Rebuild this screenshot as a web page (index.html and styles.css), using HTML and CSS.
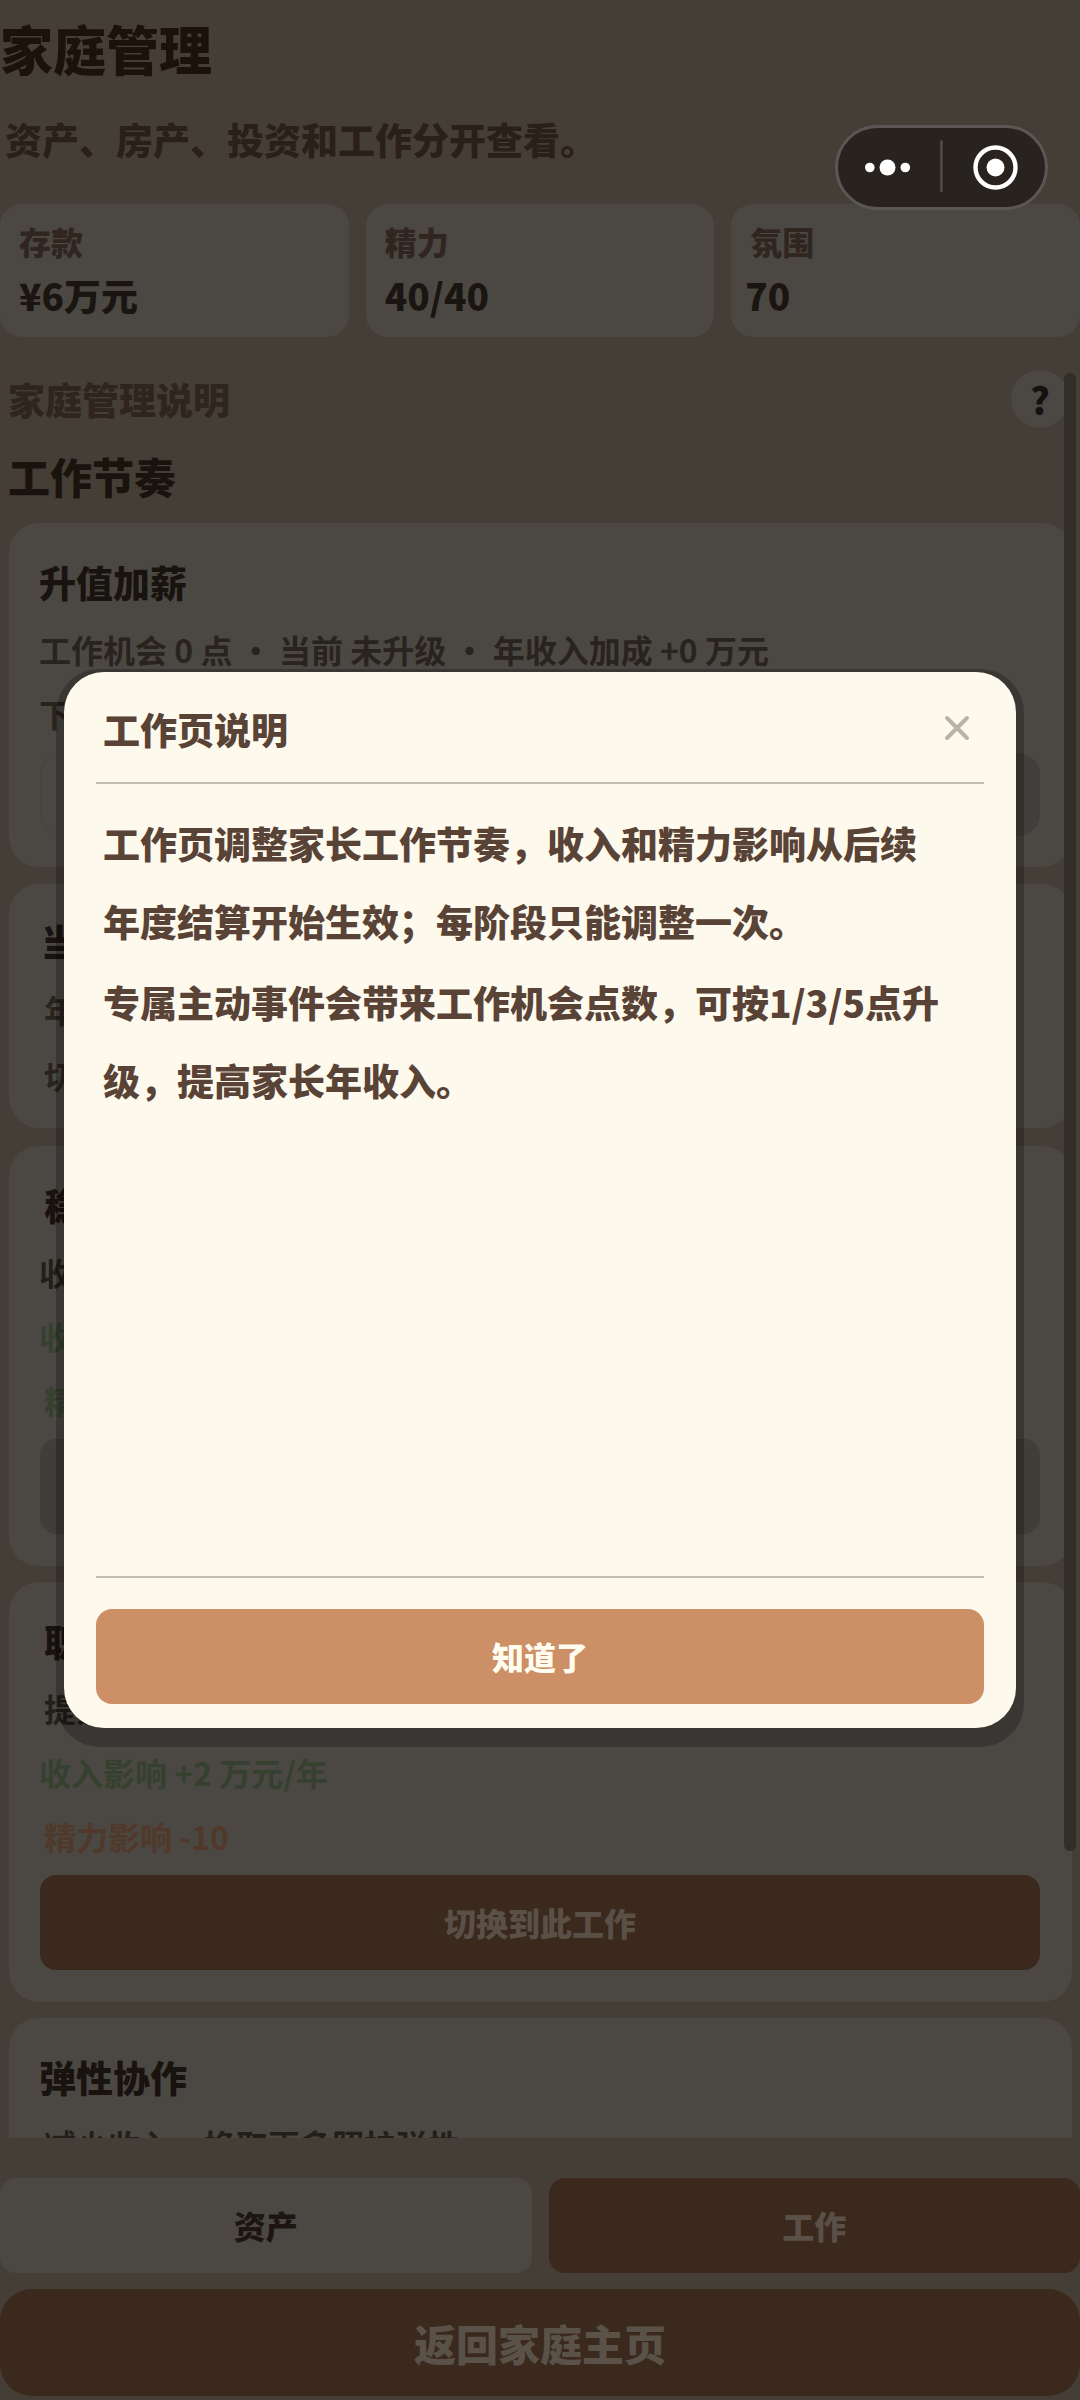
FILE: index.html
```html
<!DOCTYPE html>
<html lang="zh-CN">
<head>
<meta charset="utf-8">
<title>家庭管理</title>
<link rel="stylesheet" href="styles.css">
</head>
<body>
<main class="page">
  <h1 class="page-title">家庭管理</h1>
  <p class="page-subtitle">资产、房产、投资和工作分开查看。</p>

  <section class="stats">
    <div class="stat"><span class="stat-label">存款</span><span class="stat-value">¥6万元</span></div>
    <div class="stat"><span class="stat-label">精力</span><span class="stat-value">40/40</span></div>
    <div class="stat stat-mood"><span class="stat-label">氛围</span><span class="stat-value">70</span></div>
  </section>

  <section class="scroll">
    <div class="help-row">
      <span class="help-label">家庭管理说明</span>
      <button class="help-button">?</button>
    </div>
    <h2 class="section-title">工作节奏</h2>

    <div class="cards">
      <article class="card card-raise">
        <h3 class="card-title">升值加薪</h3>
        <p class="line">工作机会 0 点 ・ 当前 未升级 ・ 年收入加成 +0 万元</p>
        <p class="line">下</p>
        <div class="raise-actions"><span class="ghost"></span><span class="ghost ghost-off"></span></div>
      </article>
      <article class="card card-current">
        <h3 class="card-title nudge">当</h3>
        <p class="line indent">年</p>
        <p class="line indent">切</p>
      </article>
      <article class="card">
        <h3 class="card-title indent">稳</h3>
        <p class="line strong">收</p>
        <p class="line good">收</p>
        <p class="line good indent">精</p>
        <button class="action action-off"></button>
      </article>
      <article class="card">
        <h3 class="card-title indent">职</h3>
        <p class="line strong indent">提升</p>
        <p class="line good">收入影响 +2 万元/年</p>
        <p class="line bad indent">精力影响 -10</p>
        <button class="action">切换到此工作</button>
      </article>
      <article class="card">
        <h3 class="card-title">弹性协作</h3>
        <p class="line strong indent">减少收入，换取更多照护弹性</p>
      </article>
    </div>
    <span class="scrollbar"></span>
  </section>

  <nav class="tabs">
    <button class="tab">资产</button>
    <button class="tab tab-active">工作</button>
  </nav>
  <button class="back">返回家庭主页</button>

  <div class="capsule">
    <svg width="213" height="85" viewBox="0 0 213 85">
      <rect x="1.5" y="1.5" width="210" height="82" rx="41" fill="#28231f" stroke="#5b5754" stroke-width="3"/>
      <g fill="#fff">
        <circle cx="34.8" cy="42.5" r="4.8"/>
        <circle cx="52.5" cy="42.5" r="8"/>
        <circle cx="70.3" cy="42.5" r="4.8"/>
        <circle cx="160.5" cy="42.5" r="9"/>
      </g>
      <path d="M106.4 15.5v51.5" stroke="#504c48" stroke-width="2.6"/>
      <circle cx="160.5" cy="42.5" r="20" fill="none" stroke="#fff" stroke-width="4.4"/>
    </svg>
  </div>

  <section class="dialog">
    <header class="dialog-head">
      <h2 class="dialog-title">工作页说明</h2>
      <svg class="close" width="28" height="28" viewBox="0 0 28 28"><path d="M4 4l20 20M24 4L4 24" stroke="#b7b3a8" stroke-width="4" stroke-linecap="round"/></svg>
    </header>
    <div class="dialog-body">
      <p>工作页调整家长工作节奏，收入和精力影响从后续<br>年度结算开始生效；每阶段只能调整一次。</p>
      <p>专属主动事件会带来工作机会点数，可按1/3/5点升<br>级，提高家长年收入。</p>
    </div>
    <footer class="dialog-foot">
      <button class="confirm">知道了</button>
    </footer>
  </section>
</main>
</body>
</html>
```
FILE: styles.css
```css
* { box-sizing: border-box; }

body, h1, h2, h3, p { margin: 0; }

body {
  background: #443e37;
  font-family: "Noto Sans CJK SC", "Noto Sans", sans-serif;
  font-weight: 900;
}

h1, h2, h3 { font-weight: inherit; }

button {
  border: 0;
  padding: 0;
  font: inherit;
}

.page {
  position: relative;
  display: flex;
  flex-direction: column;
  width: 1080px;
  height: 2400px;
  overflow: hidden;
}

.page-title {
  height: 95px;
  font-size: 53px;
  line-height: 96px;
  color: #1d110c;
}

.page-subtitle {
  height: 87px;
  padding-left: 5px;
  font-size: 37px;
  line-height: 88px;
  color: #2b1f1a;
}

.stats {
  display: grid;
  grid-template-columns: repeat(3, 1fr);
  gap: 17px;
  height: 133px;
  margin-top: 22px;
}

.stat {
  display: flex;
  flex-direction: column;
  padding: 15px 19px 0;
  border-radius: 22px;
  background: #4b4843;
}

.stat-label { font-size: 32px; line-height: 44px; color: #30261f; }
.stat-value { font-size: 37px; line-height: 64px; color: #1a1511; }
.stat-mood .stat-value { margin-left: -5px; }

.scroll {
  position: relative;
  height: 1768px;
  margin-top: 33px;
  padding: 0 8px 0 9px;
  overflow: hidden;
}

.help-row {
  display: flex;
  align-items: center;
  justify-content: space-between;
  height: 58px;
  padding-right: 3px;
}

.help-label { margin-left: -1px; font-size: 37px; color: #2f251d; }

.help-button {
  width: 58px;
  height: 58px;
  border-radius: 50%;
  background: #4b4843;
  font-size: 37px;
  line-height: 58px;
  color: #14110f;
}

.section-title {
  height: 95px;
  margin-left: -1px;
  font-size: 42px;
  line-height: 96px;
  color: #1a130d;
}

.cards { display: flex; flex-direction: column; gap: 16px; }

.card {
  height: 420px;
  padding: 24px 32px 0 31px;
  border-radius: 30px;
  background: #4b4843;
}

.card-raise { height: 344px; margin-bottom: 1px; }
.card-current { height: 244px; padding-top: 22px; margin-bottom: 2px; }

.card-title {
  height: 70px;
  margin-left: -1px;
  font-size: 37px;
  line-height: 70px;
  color: #19130f;
}

.line {
  height: 64px;
  margin-left: -1px;
  font-size: 32px;
  line-height: 64px;
  font-weight: 700;
  color: #29231e;
  white-space: nowrap;
}

.card-current .line { height: 66px; line-height: 66px; }

.nudge { padding-left: 2px; }
.indent { padding-left: 5px; }
.strong { color: #231e19; }
.good { color: #36402f; }
.bad { color: #50382a; }

.raise-actions {
  display: grid;
  grid-template-columns: 1fr 1fr;
  gap: 17px;
  margin-top: 8px;
}

.ghost {
  height: 83px;
  border: 2px solid #474540;
  border-radius: 22px;
}

.ghost-off { border: 0; background: #413f3b; }

.action {
  display: block;
  width: 1000px;
  height: 95px;
  margin-top: 7px;
  padding-bottom: 2px;
  border-radius: 16px;
  background: #3b291e;
  font-size: 32px;
  color: #5a5048;
}

.action-off { background: #403e39; }

.scrollbar {
  position: absolute;
  top: 3px;
  right: 4px;
  width: 12px;
  height: 1478px;
  border-radius: 6px;
  background: #312e2a;
}

.tabs {
  display: grid;
  grid-template-columns: 1fr 1fr;
  gap: 17px;
  margin-top: 40px;
}

.tab {
  height: 95px;
  padding-bottom: 2px;
  border-radius: 16px;
  background: #4b4843;
  font-size: 32px;
  color: #1c1511;
}

.tab-active { background: #3b291e; color: #5a5048; }

.back {
  height: 107px;
  margin-top: 16px;
  border-radius: 32px;
  background: #3b291e;
  font-size: 42px;
  color: #5a5249;
}

.capsule {
  position: absolute;
  top: 125px;
  left: 835px;
  height: 85px;
}

.dialog {
  position: absolute;
  top: 672px;
  left: 64px;
  z-index: 1;
  display: flex;
  flex-direction: column;
  width: 952px;
  height: 1056px;
  padding: 0 32px 24px;
}

/* Hard-edged drop shadow, deeper at the bottom than at the top */
.dialog::before {
  content: "";
  position: absolute;
  inset: -3px -8px -19px;
  z-index: -1;
  border-radius: 44px;
  background: rgba(0, 0, 0, 0.23);
}

.dialog::after {
  content: "";
  position: absolute;
  inset: 0;
  z-index: -1;
  border-radius: 40px;
  background: #fdf9ec;
}

.dialog-head {
  display: flex;
  align-items: center;
  justify-content: space-between;
  height: 112px;
  padding: 2px 13px 0 7px;
  border-bottom: 2px solid #c2beb3;
}

.dialog-title { padding-top: 1px; font-size: 37px; color: #594337; }

.dialog-body {
  flex: 1;
  padding: 20px 0 0 7px;
  font-size: 37px;
  line-height: 78px;
  color: #594337;
  white-space: nowrap;
}

.dialog-body p + p { margin-top: 3px; }

.dialog-foot {
  padding-top: 31px;
  border-top: 2px solid #c2beb3;
}

.confirm {
  display: block;
  width: 100%;
  height: 95px;
  padding-bottom: 2px;
  border-radius: 16px;
  background: #cd8f66;
  font-size: 32px;
  color: #fffcf0;
}
```
